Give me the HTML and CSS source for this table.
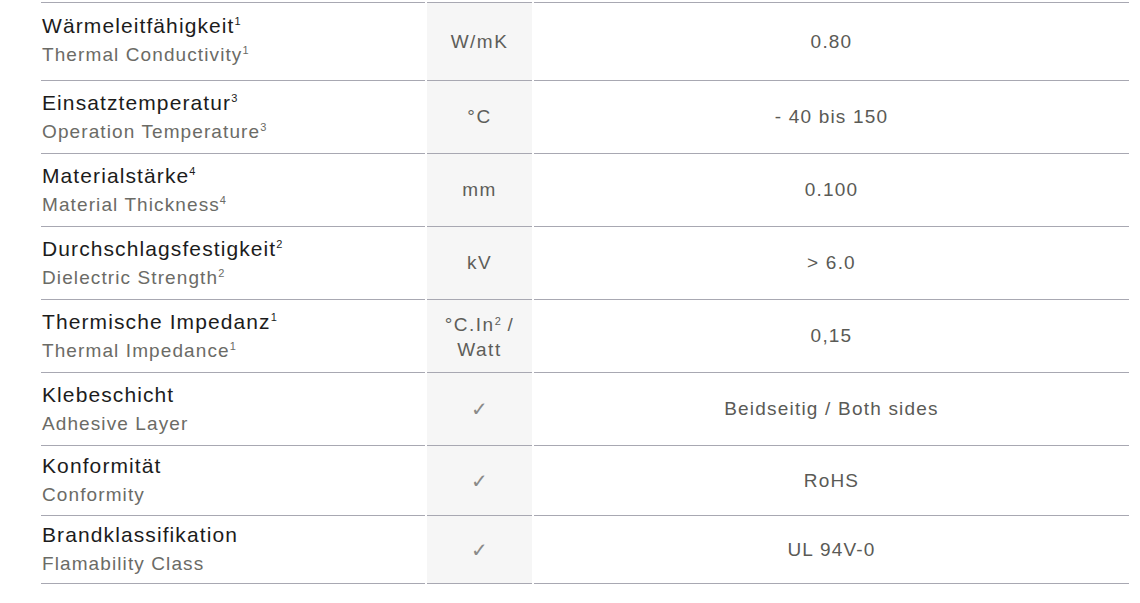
FILE: index.html
```html
<!DOCTYPE html>
<html lang="de">
<head>
    <meta charset="UTF-8">
    <meta name="viewport" content="width=device-width, initial-scale=1.0">
    <title>Technische Daten</title>
    <link rel="stylesheet" href="styles.css">
</head>
<body>
<table class="specs">
    <colgroup>
        <col class="col-prop">
        <col class="col-unit">
        <col class="col-value">
    </colgroup>
    <tbody>
        <tr class="row-first">
            <td class="prop">
                <div class="de">Wärmeleitfähigkeit<sup>1</sup></div>
                <div class="en">Thermal Conductivity<sup>1</sup></div>
            </td>
            <td class="unit">W/mK</td>
            <td class="value">0.80</td>
        </tr>
        <tr>
            <td class="prop">
                <div class="de">Einsatztemperatur<sup>3</sup></div>
                <div class="en">Operation Temperature<sup>3</sup></div>
            </td>
            <td class="unit">°C</td>
            <td class="value">- 40 bis 150</td>
        </tr>
        <tr>
            <td class="prop">
                <div class="de">Materialstärke<sup>4</sup></div>
                <div class="en">Material Thickness<sup>4</sup></div>
            </td>
            <td class="unit">mm</td>
            <td class="value">0.100</td>
        </tr>
        <tr>
            <td class="prop">
                <div class="de">Durchschlagsfestigkeit<sup>2</sup></div>
                <div class="en">Dielectric Strength<sup>2</sup></div>
            </td>
            <td class="unit">kV</td>
            <td class="value">&gt; 6.0</td>
        </tr>
        <tr>
            <td class="prop">
                <div class="de">Thermische Impedanz<sup>1</sup></div>
                <div class="en">Thermal Impedance<sup>1</sup></div>
            </td>
            <td class="unit unit-wrap">°C.In<sup>2</sup> /<br>Watt</td>
            <td class="value">0,15</td>
        </tr>
        <tr>
            <td class="prop">
                <div class="de">Klebeschicht</div>
                <div class="en">Adhesive Layer</div>
            </td>
            <td class="unit check">✓</td>
            <td class="value">Beidseitig / Both sides</td>
        </tr>
        <tr class="row-compact">
            <td class="prop">
                <div class="de">Konformität</div>
                <div class="en">Conformity</div>
            </td>
            <td class="unit check">✓</td>
            <td class="value">RoHS</td>
        </tr>
        <tr class="row-compact-last">
            <td class="prop">
                <div class="de">Brandklassifikation</div>
                <div class="en">Flamability Class</div>
            </td>
            <td class="unit check">✓</td>
            <td class="value">UL 94V-0</td>
        </tr>
    </tbody>
</table>
</body>
</html>
```

FILE: styles.css
```css
* {
    box-sizing: border-box;
    margin: 0;
    padding: 0;
}

body {
    background-color: #fff;
    font-family: 'Liberation Sans', Arial, sans-serif;
    color: #1e1e1e;
}

.specs {
    margin: 2px 0 0 39px;
    width: 1092px;
    table-layout: fixed;
    border-collapse: separate;
    border-spacing: 2px 0;
}

.col-prop {
    width: 384px;
}

.col-unit {
    width: 105px;
}

.col-value {
    width: 595px;
}

.specs td {
    border-bottom: 1px solid #a8a8b2;
    vertical-align: middle;
}

.specs tr:first-child td {
    border-top: 1px solid #a8a8b2;
}

.prop {
    padding: 8px 0 6px 1px;
}

.de {
    font-size: 21px;
    line-height: 28px;
    letter-spacing: 1.1px;
    color: #1c1c1c;
}

.en {
    font-size: 19px;
    line-height: 30px;
    letter-spacing: 1.1px;
    color: #6b6b66;
}

sup {
    font-size: 11px;
    line-height: 0;
    letter-spacing: 0;
    vertical-align: 8px;
}

.en sup {
    vertical-align: 7px;
}

.unit {
    background-color: #f6f6f6;
    text-align: center;
    font-size: 19px;
    letter-spacing: 1.5px;
    color: #5e5e5a;
}

.unit-wrap {
    line-height: 25px;
    padding-top: 1px;
}

.unit-wrap sup {
    vertical-align: 6px;
}

.check {
    font-size: 20px;
    color: #8a8a88;
    letter-spacing: 0;
}

.value {
    text-align: center;
    font-size: 19px;
    letter-spacing: 1.2px;
    color: #5a5a56;
}

.row-first .prop {
    padding-top: 9px;
    padding-bottom: 10px;
}

.row-compact .prop {
    padding-top: 6px;
    padding-bottom: 5px;
}

.row-compact-last .prop {
    padding-top: 5px;
    padding-bottom: 4px;
}
```
